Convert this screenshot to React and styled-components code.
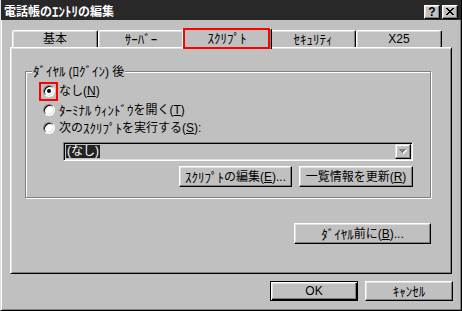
import React from 'react';
import styled, { createGlobalStyle } from 'styled-components';

const GlobalStyle = createGlobalStyle`
  html, body {
    margin: 0;
    padding: 0;
    background: #c0c0c0;
  }

  body {
    font-family: "Liberation Sans", "Noto Sans CJK JP", sans-serif;
    font-size: 12px;
    line-height: 14px;
    color: #000;
  }
`;

const Window = styled.div`
  width: 462px;
  height: 311px;
  box-sizing: border-box;
  background: #c0c0c0;
  border: 1px solid;
  border-top: 0;
  border-color: transparent #000 #000 #dfdfdf;
  box-shadow: inset 1px 0 #fff, inset -1px -1px #808080;
  display: flex;
  flex-direction: column;
`;

const TitleBar = styled.div`
  flex: none;
  height: 20px;
  box-sizing: border-box;
  padding: 3px 3px 0 3px;
  background: #282828;
  display: flex;
  align-items: center;
`;

const Title = styled.span`
  flex: 1;
  color: #fff;
  font-weight: bold;
  white-space: nowrap;
`;

const CaptionButton = styled.span`
  width: 16px;
  height: 14px;
  box-sizing: border-box;
  background: #c0c0c0;
  border: 1px solid;
  border-color: #fff #000 #000 #fff;
  box-shadow: inset -1px -1px #808080, inset 1px 1px #dfdfdf;
  display: flex;
  align-items: center;
  justify-content: center;
  font: bold 12px/12px "Liberation Sans", sans-serif;
  color: #000;

  & + & {
    margin-left: 2px;
  }
`;

// half-width katakana: Noto draws them short, so bump them a little
const Kana = styled.span`
  font-family: "Noto Sans CJK JP", sans-serif;
  font-size: 13px;
`;

const Body = styled.div`
  flex: 1;
  display: flex;
  flex-direction: column;
  padding: 10px 9px 0 9px;
`;

const TabRow = styled.div`
  display: flex;
  height: 17px;
  padding-left: 2px;
  align-items: flex-start;
`;

const Tab = styled.div`
  position: relative;
  flex: none;
  width: 86px;
  height: 17px;
  box-sizing: border-box;
  border: 1px solid;
  border-bottom: 0;
  border-color: #fff #000 transparent #fff;
  border-radius: 2px 2px 0 0;
  box-shadow: inset -1px 0 #808080, inset 1px 1px #dfdfdf;
  background: #c0c0c0;
  display: flex;
  align-items: center;
  justify-content: center;
  white-space: nowrap;

  ${p => p.$active && `
    z-index: 1;
    width: 90px;
    height: 21px;
    margin: -2px -2px 0;
    padding-bottom: 3px;
  `}
`;

const Highlight = styled.span`
  position: absolute;
  border: 2px solid #f00;
  pointer-events: none;
  inset: ${p => p.$inset};
`;

const Panel = styled.div`
  height: 227px;
  box-sizing: border-box;
  border: 1px solid;
  border-color: #fff #000 #000 #fff;
  box-shadow: inset 1px 1px #dfdfdf, inset -1px -1px #808080;
  padding: 23px 20px 0 14px;
  display: flex;
  flex-direction: column;
`;

const GroupBox = styled.div`
  position: relative;
  height: 127px;
  box-sizing: border-box;
  border: 1px solid #808080;
  box-shadow: inset 1px 1px #fff, 1px 1px #fff;
  padding: 10px 17px 0 17px;
  display: flex;
  flex-direction: column;
`;

const Legend = styled.span`
  position: absolute;
  top: -8px;
  left: 6px;
  padding: 0 1px;
  background: #c0c0c0;
  white-space: nowrap;
`;

const RadioRow = styled.label`
  height: 18.5px;
  display: flex;
  align-items: center;
  white-space: pre;
`;

const RadioCircle = styled.span`
  position: relative;
  flex: none;
  width: 12px;
  height: 12px;
  box-sizing: border-box;
  border-radius: 50%;
  border: 1px solid;
  border-color: #808080 #fff #fff #808080;
  box-shadow: inset 1px 1px #000, inset -1px -1px #dfdfdf;
  background: #fff;
  margin-right: 4px;
  display: flex;
  align-items: center;
  justify-content: center;

  &::after {
    content: '';
    display: ${p => (p.$checked ? 'block' : 'none')};
    width: 4px;
    height: 4px;
    border-radius: 50%;
    background: #000;
  }
`;

const Combo = styled.div`
  margin: 4.5px 0 0 20px;
  height: 19px;
  box-sizing: border-box;
  border: 1px solid;
  border-color: #808080 #fff #fff #808080;
  box-shadow: inset 1px 1px #000, inset -1px -1px #dfdfdf;
  background: #c0c0c0;
  padding: 1px 1px 1px 2px;
  display: flex;
  align-items: center;
`;

const Selected = styled.span`
  height: 13px;
  line-height: 13px;
  padding: 0 1px;
  background: #222;
  color: #fff;
  white-space: nowrap;
`;

const DropButton = styled.span`
  margin-left: auto;
  width: 16px;
  height: 15px;
  box-sizing: border-box;
  border: 1px solid;
  border-color: #dfdfdf #000 #000 #dfdfdf;
  box-shadow: inset -1px -1px #808080, inset 1px 1px #fff;
  background: #c0c0c0;
  display: flex;
  align-items: center;
  justify-content: center;
`;

const ButtonRow = styled.div`
  display: flex;
  justify-content: flex-end;
  gap: 7px;
  margin-top: ${p => p.$top || 0}px;
`;

const Button = styled.div`
  width: ${p => p.$w}px;
  height: ${p => p.$h || 21}px;
  box-sizing: border-box;
  background: #c0c0c0;
  border: 1px solid;
  border-color: ${p => (p.$default ? '#000' : '#fff #000 #000 #fff')};
  box-shadow: ${p =>
    p.$default
      ? 'inset 1px 1px #fff, inset -1px -1px #000, inset -2px -2px #808080, inset 2px 2px #dfdfdf'
      : 'inset -1px -1px #808080, inset 1px 1px #dfdfdf'};
  display: flex;
  align-items: center;
  justify-content: center;
  white-space: nowrap;
`;

const Footer = styled.div`
  display: flex;
  justify-content: flex-end;
  gap: 7px;
  margin: 7px -1px 0 0;
`;

const CloseGlyph = () => (
  <svg width="8" height="7" viewBox="0 0 8 7" shapeRendering="crispEdges">
    <path
      d="M0 0h2v1H0zM6 0h2v1H6zM1 1h2v1H1zM5 1h2v1H5zM2 2h4v1H2zM3 3h2v1H3zM2 4h4v1H2zM1 5h2v1H1zM5 5h2v1H5zM0 6h2v1H0zM6 6h2v1H6z"
      fill="#000"
    />
  </svg>
);

const ArrowGlyph = () => (
  <svg width="8" height="5" viewBox="0 0 8 5" shapeRendering="crispEdges">
    <path d="M1 1h7v1H1zM2 2h5v1H2zM3 3h3v1H3zM4 4h1v1H4z" fill="#fff" />
    <path d="M0 0h7v1H0zM1 1h5v1H1zM2 2h3v1H2zM3 3h1v1H3z" fill="#808080" />
  </svg>
);

// wrap runs of half-width katakana (and the spaces between them)
const hw = text =>
  text.split(/([\uFF61-\uFF9F][\uFF61-\uFF9F ]*)/).map((part, i) =>
    /[\uFF61-\uFF9F]/.test(part) ? <Kana key={i}>{part}</Kana> : part
  );

const tabs = ['基本', 'ｻｰﾊﾞｰ', 'ｽｸﾘﾌﾟﾄ', 'ｾｷｭﾘﾃｨ', 'X25'];

const radios = [
  { label: 'なし', key: 'N', checked: true },
  { label: 'ﾀｰﾐﾅﾙ ｳｨﾝﾄﾞｳを開く', key: 'T' },
  { label: '次のｽｸﾘﾌﾟﾄを実行する', key: 'S', tail: ':' },
];

export default function App() {
  return (
    <>
      <GlobalStyle />
      <Window>
        <TitleBar>
          <Title>{hw('電話帳のｴﾝﾄﾘの編集')}</Title>
          <CaptionButton>?</CaptionButton>
          <CaptionButton>
            <CloseGlyph />
          </CaptionButton>
        </TitleBar>
        <Body>
          <TabRow>
            {tabs.map((t, i) => (
              <Tab key={t} $active={i === 2}>
                {hw(t)}
                {i === 2 && <Highlight $inset="-1px 1px 0 0" />}
              </Tab>
            ))}
          </TabRow>
          <Panel>
            <GroupBox>
              <Legend>{hw('ﾀﾞｲﾔﾙ (ﾛｸﾞｲﾝ) ')}後</Legend>
              {radios.map(r => (
                <RadioRow key={r.key}>
                  <RadioCircle $checked={r.checked}>
                    {r.checked && <Highlight $inset="-4px -4px -5px -5px" />}
                  </RadioCircle>
                  {hw(r.label)}(<u>{r.key}</u>){r.tail}
                </RadioRow>
              ))}
              <Combo>
                <Selected>(なし)</Selected>
                <DropButton>
                  <ArrowGlyph />
                </DropButton>
              </Combo>
              <ButtonRow $top={5}>
                <Button $w={113}>
                  {hw('ｽｸﾘﾌﾟﾄの編集')}(<u>E</u>)...
                </Button>
                <Button $w={114}>
                  一覧情報を更新(<u>R</u>)
                </Button>
              </ButtonRow>
            </GroupBox>
            <ButtonRow $top={25}>
              <Button $w={137}>
                {hw('ﾀﾞｲﾔﾙ前に')}(<u>B</u>)...
              </Button>
            </ButtonRow>
          </Panel>
          <Footer>
            <Button $w={88} $h={20} $default>
              OK
            </Button>
            <Button $w={88} $h={20}>
              {hw('ｷｬﾝｾﾙ')}
            </Button>
          </Footer>
        </Body>
      </Window>
    </>
  );
}
